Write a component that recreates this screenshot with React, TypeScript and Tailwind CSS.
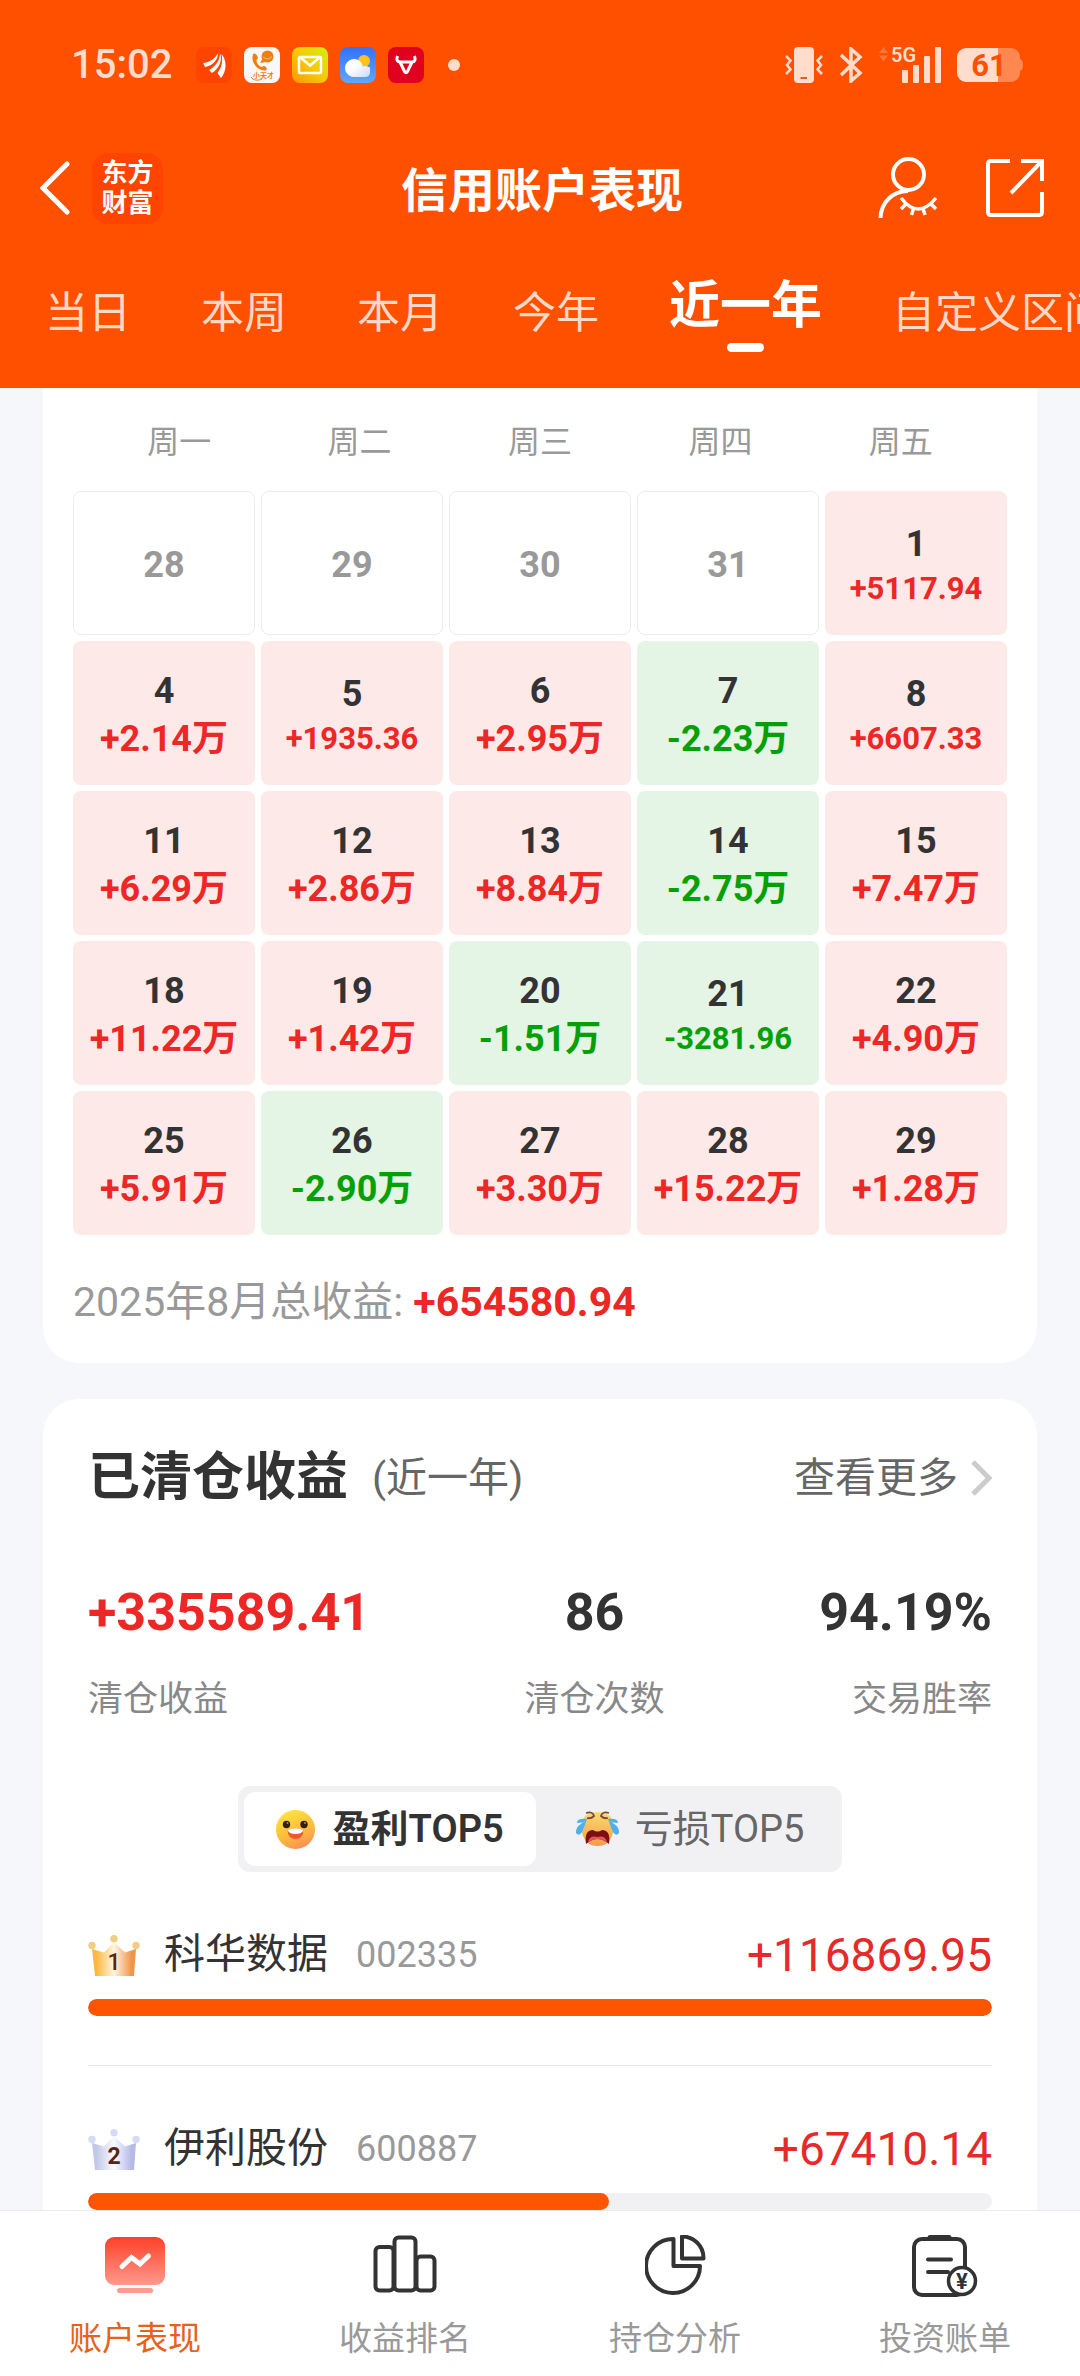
import React, { useState } from 'react';
import clsx from 'clsx';

const RANGES = ['当日', '本周', '本月', '今年', '近一年', '自定义区间'];
const WEEKDAYS = ['周一', '周二', '周三', '周四', '周五'];

interface Day {
  day: number;
  value?: string;
}

const DAYS: Day[] = [
  { day: 28 }, { day: 29 }, { day: 30 }, { day: 31 }, { day: 1, value: '+5117.94' },
  { day: 4, value: '+2.14万' }, { day: 5, value: '+1935.36' }, { day: 6, value: '+2.95万' }, { day: 7, value: '-2.23万' }, { day: 8, value: '+6607.33' },
  { day: 11, value: '+6.29万' }, { day: 12, value: '+2.86万' }, { day: 13, value: '+8.84万' }, { day: 14, value: '-2.75万' }, { day: 15, value: '+7.47万' },
  { day: 18, value: '+11.22万' }, { day: 19, value: '+1.42万' }, { day: 20, value: '-1.51万' }, { day: 21, value: '-3281.96' }, { day: 22, value: '+4.90万' },
  { day: 25, value: '+5.91万' }, { day: 26, value: '-2.90万' }, { day: 27, value: '+3.30万' }, { day: 28, value: '+15.22万' }, { day: 29, value: '+1.28万' },
];

const STOCKS = [
  { rank: 1, name: '科华数据', code: '002335', profit: 116869.95 },
  { rank: 2, name: '伊利股份', code: '600887', profit: 67410.14 },
];

const AppIcons: React.FC = () => (
  <div className="flex gap-3">
    <svg className="size-9" viewBox="0 0 36 36" fill="#fff">
      <rect width="36" height="36" rx="8" fill="#ff4400" />
      <path d="M7 16C13 15.500 19 12 22 6C22 13 17 18.500 9 20Z" />
      <path d="M13 23C20 19 23.500 14 24 6.500C27 13 23 21.500 16 26Z" />
      <path d="M21.500 26C26 20 27 14 25.500 7C31 13 31 24 25 31Z" />
    </svg>
    <svg className="size-9" viewBox="0 0 36 36">
      <rect width="36" height="36" rx="8" fill="#f8f8f8" />
      <circle cx="23.500" cy="9.500" r="6" fill="#f07f12" />
      <path d="M16 16L19 11L22 15Z" fill="#f07f12" />
      <path d="M19 10Q24 14 28 9.500" fill="none" stroke="#f9bd7c" />
      <path d="M9 7.500C6.500 14 12 23 21 23.500C24 23 23 20 20 19L17.500 20C14 18.500 12.500 16 12.500 13L14 11C13 7 10 5.500 9 7.500Z" fill="#f07f12" />
      <text x="19.500" y="31" fontSize="7" fontWeight="700" textAnchor="middle" fill="#f07f12">小天才</text>
      <path d="M7 30C9 33.500 14 34 18 32" fill="none" stroke="#f07f12" />
    </svg>
    <svg className="size-9" viewBox="0 0 36 36">
      <defs>
        <linearGradient id="mailBg" x1="0" y1="1" x2="1" y2="0">
          <stop offset="0" stopColor="#ff9500" />
          <stop offset="0.500" stopColor="#f7c908" />
          <stop offset="1" stopColor="#cff010" />
        </linearGradient>
      </defs>
      <rect width="36" height="36" rx="8" fill="url(#mailBg)" />
      <rect x="7" y="10" width="22" height="16" rx="1" fill="none" stroke="#fff" strokeWidth="2.500" />
      <path d="M9 11L18 18.500L27 11" fill="none" stroke="#fff" strokeWidth="2.500" />
    </svg>
    <svg className="size-9" viewBox="0 0 36 36">
      <defs>
        <linearGradient id="skyBg" x1="0" y1="0" x2="0" y2="1">
          <stop offset="0" stopColor="#2f72fb" />
          <stop offset="1" stopColor="#62a6fb" />
        </linearGradient>
        <linearGradient id="cloud" x1="0" y1="0" x2="1" y2="1">
          <stop offset="0.400" stopColor="#fff" />
          <stop offset="1" stopColor="#c5dcfb" />
        </linearGradient>
      </defs>
      <rect width="36" height="36" rx="8" fill="url(#skyBg)" />
      <circle cx="24" cy="14" r="6" fill="#ffc21c" />
      <path d="M14 30A9 9 0 1 1 21.500 16Q22.500 18 22.500 19.500Q26 18 30 20.500V25Q30 30 25 30Z" fill="url(#cloud)" />
    </svg>
    <svg className="size-9" viewBox="0 0 36 36">
      <rect width="36" height="36" rx="8" fill="#e0001f" />
      <path d="M9.500 9Q7.500 15 12.500 15H23.500Q28.500 15 26.500 9" fill="none" stroke="#fff" strokeWidth="3" />
      <path d="M12 15L16.500 24.500Q18 27 19.500 24.500L24 15" fill="none" stroke="#fff" strokeWidth="3" />
    </svg>
  </div>
);

const StatusIcons: React.FC = () => (
  <div className="flex items-center gap-4">
    <svg className="h-9 w-[38px]" viewBox="0 0 38 36" fill="none" stroke="#ffdccb" strokeWidth="2.500">
      <rect x="9" width="20" height="36" rx="4" fill="#ffdccb" stroke="none" />
      <path d="M15.500 31H22" stroke="#d9622b" strokeWidth="2" />
      <path d="M1 9L5.500 13.500L2 18L5.500 22.500L1 27" />
      <path d="M37 9L32.500 13.500L36 18L32.500 22.500L37 27" />
    </svg>
    <svg className="h-9 w-6" viewBox="0 0 24 36" fill="none" stroke="#ffdccb" strokeWidth="3.500">
      <path d="M2 8L21 26L12 34V2L21 10L2 28" />
    </svg>
    <svg className="h-9 w-[62px] overflow-visible" viewBox="0 0 62 36" fill="#ffdccb">
      <path d="M0 6L4.500 0L9 6ZM0 8.500L4.500 14.500L9 8.500Z" fill="#ff7537" />
      <text x="12" y="15" fontSize="20" fontWeight="600">5G</text>
      <rect x="23" y="23" width="6" height="13" rx="1" />
      <rect x="34" y="18" width="6" height="18" rx="1" />
      <rect x="45" y="9" width="6" height="27" rx="1" />
      <rect x="56" y="0" width="6" height="36" rx="1" />
    </svg>
    <svg className="h-[34px] w-[66px] overflow-visible" viewBox="0 0 66 34">
      <path d="M41 0H54A9 9 0 0 1 63 9V11Q66 12 66 17T63 23V25A9 9 0 0 1 54 34H41Z" fill="#ff8850" />
      <path d="M41 0H9A9 9 0 0 0 0 9V25A9 9 0 0 0 9 34H41Z" fill="#ffdccb" />
      <text x="32" y="28" fontSize="31" fontWeight="700" textAnchor="middle" fill="#ff5000">61</text>
    </svg>
  </div>
);

const UserIcon: React.FC = () => (
  <svg className="h-[62px] w-[60px]" viewBox="0 0 60 62" fill="none" stroke="#fff" strokeWidth="4">
    <circle cx="30.500" cy="17.500" r="15.500" />
    <path d="M30 34C15 34 3 45 2.500 61" />
    <path d="M23 41Q40 63 58 41" strokeWidth="3.500" />
    <path d="M28 47L23 52M35.500 51.500L33.500 58M45 51.500L47 58M53 47L58 52" strokeWidth="3.500" />
  </svg>
);

const ShareIcon: React.FC = () => (
  <svg className="size-[58px]" viewBox="0 0 58 58" fill="none" stroke="#fff" strokeWidth="4">
    <path d="M24 2H5Q2 2 2 5V53Q2 56 5 56H53Q56 56 56 53V33" />
    <path d="M35 2H56V22M56 2L25 34" />
  </svg>
);

const CrownIcon: React.FC<{ rank: number }> = ({ rank }) => {
  const [edge, middle, end] = rank === 1 ? ['#fbb840', '#fff6e2', '#f0944a'] : ['#c3c8e6', '#fafaff', '#b4b9e8'];
  return (
    <svg className="h-[41px] w-[52px]" viewBox="0 0 52 41">
      <defs>
        <linearGradient id={`crown${rank}`}>
          <stop offset="0.100" stopColor={edge} />
          <stop offset="0.500" stopColor={middle} />
          <stop offset="0.900" stopColor={end} />
        </linearGradient>
      </defs>
      <g fill={rank === 1 ? '#f3cd80' : '#d5daf5'}>
        <circle cx="4" cy="10.500" r="3.700" />
        <circle cx="26" cy="3.700" r="3.700" />
        <circle cx="48" cy="10.500" r="3.700" />
      </g>
      <path d="M4 14L16 17.500L26 7L37 17.500L48 14L46 41H7Z" fill={`url(#crown${rank})`} />
      <text x="26" y="35" fontSize="23" fontWeight={rank === 1 ? 500 : 700} textAnchor="middle" fill="#5c2216">{rank}</text>
    </svg>
  );
};

const SmileIcon: React.FC = () => (
  <svg className="size-[39px]" viewBox="0 0 39 39">
    <defs>
      <linearGradient id="smile" x1="0.300" y1="0" x2="0.700" y2="1">
        <stop offset="0" stopColor="#ffe43c" />
        <stop offset="0.600" stopColor="#fdb93e" />
        <stop offset="1" stopColor="#f98c58" />
      </linearGradient>
    </defs>
    <circle cx="19.500" cy="19.500" r="19.500" fill="url(#smile)" />
    <circle cx="10.500" cy="14.500" r="3.700" fill="#33200f" />
    <circle cx="28" cy="14.500" r="3.700" fill="#33200f" />
    <circle cx="11.500" cy="13" r="1" fill="#a58f80" />
    <circle cx="29" cy="13" r="1" fill="#a58f80" />
    <path d="M11.500 20Q19.500 16.500 27.500 20Q27 29 19.500 29T11.500 20Z" fill="#f4572e" />
    <path d="M11.500 20Q19.500 16.500 27.500 20Q26 24 19.500 24T11.500 20Z" fill="#fff" />
  </svg>
);

const CryIcon: React.FC = () => (
  <svg className="h-[36px] w-[43px]" viewBox="0 0 43 36">
    <defs>
      <linearGradient id="cry" x1="0" y1="0" x2="0" y2="1">
        <stop offset="0" stopColor="#fbdc6c" />
        <stop offset="1" stopColor="#f39a4e" />
      </linearGradient>
    </defs>
    <path d="M9 5Q21.500 -3 34 5Q40 14 36 25Q32 35 21.500 35T7 25Q3 14 9 5Z" fill="url(#cry)" />
    <path d="M10 2Q17 0 18 5Q15 8 11 7M33 2Q26 0 25 5Q28 8 32 7" fill="none" stroke="#7a4a45" strokeWidth="1.800" />
    <path d="M10 33Q8 19 17 19Q21.500 22 26 19Q35 19 33 33Q27 28 21.500 28T10 33Z" fill="#7d0f14" />
    <path d="M12 31Q14 24 21.500 26Q29 24 31 31Q26 28 21.500 28T12 31Z" fill="#e2555f" />
    <path d="M11 8Q1 7 1 12Q6 12 10 10Q-1 15 0 22Q3 26 6 21Q9 14 11 8Z" fill="#4fb0ee" />
    <path d="M32 8Q42 7 42 12Q37 12 33 10Q44 15 43 22Q40 26 37 21Q34 14 32 8Z" fill="#4fb0ee" />
  </svg>
);

const PerformanceIcon: React.FC = () => (
  <svg className="h-[62px] w-[60px]" viewBox="0 0 60 62">
    <defs>
      <linearGradient id="perf" x1="0" y1="0" x2="0" y2="1">
        <stop offset="0" stopColor="#ff4029" />
        <stop offset="1" stopColor="#ff998c" />
      </linearGradient>
    </defs>
    <rect y="2" width="60" height="48" rx="9" fill="url(#perf)" />
    <rect x="12" y="53" width="36" height="5" rx="2.500" fill="#fe9b90" />
    <path d="M17 31.500L26.500 22.500L35 29L43.500 21" fill="none" stroke="#fff" strokeWidth="5" strokeLinecap="round" />
  </svg>
);

const RankingIcon: React.FC = () => (
  <svg className="h-[62px] w-[64px]" viewBox="0 0 64 62" fill="none" stroke="#333" strokeWidth="4">
    <rect x="2.500" y="12" width="18" height="43.500" rx="4" />
    <rect x="21.500" y="2.500" width="21" height="53" rx="4" />
    <rect x="43.500" y="21.500" width="18" height="34" rx="4" />
  </svg>
);

const HoldingIcon: React.FC = () => (
  <svg className="h-[62px] w-[61px]" viewBox="0 0 61 62" fill="none" stroke="#333" strokeWidth="4" strokeLinejoin="round">
    <path d="M28.500 4A27 27 0 1 0 55 31H28.500Z" />
    <path d="M37 1.500A21.500 21.500 0 0 1 58.500 23.500H37Z" />
  </svg>
);

const BillIcon: React.FC = () => (
  <svg className="h-[62px] w-[66px]" viewBox="0 0 66 62" fill="none" stroke="#333" strokeWidth="4" strokeLinecap="round">
    <rect x="2" y="4" width="51" height="56" rx="8" />
    <path d="M18 2.500H37" strokeWidth="5" />
    <path d="M16 24.500H39M16 37H36" />
    <circle cx="50" cy="46" r="13.500" fill="#fff" strokeWidth="3.500" />
    <text x="50" y="54" fontSize="22" fontWeight="700" textAnchor="middle" fill="#333" stroke="none">¥</text>
  </svg>
);

const NAV = [
  { label: '账户表现', Icon: PerformanceIcon },
  { label: '收益排名', Icon: RankingIcon },
  { label: '持仓分析', Icon: HoldingIcon },
  { label: '投资账单', Icon: BillIcon },
];

const DayCell: React.FC<Day> = ({ day, value }) => {
  if (!value) {
    return (
      <div className="flex h-36 items-center justify-center rounded-lg border border-[#ececec] pt-1 text-[36px] font-bold text-[#999]">
        {day}
      </div>
    );
  }
  const isGain = value.startsWith('+');
  const isLarge = value.endsWith('万');
  return (
    <div className={clsx('flex h-36 flex-col items-center justify-center rounded-lg font-bold', isGain ? 'bg-[#fde9e8]' : 'bg-[#e4f4e5]')}>
      <span className="text-[36px] leading-[52px] text-[#333]">{day}</span>
      <span
        className={clsx(
          isLarge ? 'text-[36px] leading-[44px]' : 'text-[31px] leading-[38px]',
          isGain ? 'text-[#ed2626]' : 'text-[#05a005]'
        )}
      >
        {value}
      </span>
    </div>
  );
};

const App: React.FC = () => {
  const [range, setRange] = useState('近一年');
  const [board, setBoard] = useState<'profit' | 'loss'>('profit');
  const [page, setPage] = useState('账户表现');
  const maxProfit = STOCKS[0].profit;

  return (
    <div className="flex h-screen flex-col overflow-hidden bg-[#f6f7fa] font-['Roboto','Noto_Sans_CJK_SC',sans-serif] text-[#333]">
      <header className="shrink-0 bg-[#ff5000] pt-[47px] text-white">
        <div className="flex h-9 items-center justify-between pr-[57px] pl-[71px]">
          <div className="flex items-center">
            <span className="mr-6 text-[40px] leading-9 font-medium text-[#ffdccb]">15:02</span>
            <AppIcons />
            <span className="ml-6 size-3 rounded-full bg-[#ffdccb]" />
          </div>
          <StatusIcons />
        </div>

        <div className="mt-[67px] grid h-[72px] grid-cols-[1fr_auto_1fr] items-center pr-9 pl-10">
          <div className="flex items-center gap-[22px]">
            <button type="button" aria-label="返回">
              <svg className="h-[54px] w-[30px]" viewBox="0 0 30 54" fill="none" stroke="#fff" strokeWidth="5" strokeLinecap="round">
                <path d="M27 3L3 27L27 51" />
              </svg>
            </button>
            <span className="flex size-[71px] items-center justify-center rounded-2xl bg-[#ff4400] text-center text-[26px] leading-[30px] font-bold">
              东方
              <br />
              财富
            </span>
          </div>
          <h1 className="pt-1.5 text-[47px] font-bold">信用账户表现</h1>
          <div className="flex items-center justify-end gap-12">
            <button type="button" aria-label="隐藏账户">
              <UserIcon />
            </button>
            <button type="button" aria-label="分享">
              <ShareIcon />
            </button>
          </div>
        </div>

        <nav className="flex items-start gap-[70px] overflow-x-auto pt-[52px] pb-9 pl-[45px] whitespace-nowrap [scrollbar-width:none]">
          {RANGES.map((item) => (
            <button
              key={item}
              type="button"
              onClick={() => setRange(item)}
              className={clsx(
                'flex shrink-0 flex-col items-center',
                item === range ? 'text-[51px] leading-[64px] font-bold' : 'text-[43px] leading-[78px] text-[#ffd9c8]'
              )}
            >
              {item}
              {item === range && <span className="mt-[5px] h-[9px] w-[37px] rounded-full bg-white" />}
            </button>
          ))}
        </nav>
      </header>

      <main className="min-h-0 flex-1 overflow-y-auto px-[43px] [scrollbar-width:none]">
        <section className="rounded-b-[36px] bg-white px-[30px] pt-[34px] pb-[31px]">
          <div className="mb-[29px] grid grid-cols-5 px-4 text-center text-[32px] leading-10 text-[#999]">
            {WEEKDAYS.map((name) => (
              <span key={name}>{name}</span>
            ))}
          </div>
          <div className="grid grid-cols-5 gap-1.5">
            {DAYS.map((item, i) => (
              <DayCell key={i} {...item} />
            ))}
          </div>
          <p className="mt-[37px] text-[41px] leading-[60px] text-[#999]">
            2025年8月总收益: <strong className="font-bold text-[#ed2626]">+654580.94</strong>
          </p>
        </section>

        <section className="mt-9 rounded-t-[36px] bg-white px-[45px] pt-[47px]">
          <div className="flex items-center justify-between leading-[64px]">
            <h2 className="flex items-center gap-6 text-[52px] font-bold">
              已清仓收益
              <span className="text-[41px] font-normal text-[#666]">(近一年)</span>
            </h2>
            <button type="button" className="flex items-center gap-3 text-[41px] text-[#666]">
              查看更多
              <svg className="h-9 w-[22px]" viewBox="0 0 22 36" fill="none" stroke="#ccc" strokeWidth="5">
                <path d="M3 2L19 18L3 34" />
              </svg>
            </button>
          </div>

          <dl className="mt-[73px] flex justify-between text-[35px] text-[#888]">
            <div className="flex flex-col-reverse gap-[37px]">
              <dt className="leading-10">清仓收益</dt>
              <dd className="text-[52px] leading-[60px] font-bold text-[#ed2626]">+335589.41</dd>
            </div>
            <div className="flex flex-col-reverse gap-[37px] text-center">
              <dt className="leading-10">清仓次数</dt>
              <dd className="text-[52px] leading-[60px] font-bold text-[#333]">86</dd>
            </div>
            <div className="flex flex-col-reverse gap-[37px] text-right">
              <dt className="leading-10">交易胜率</dt>
              <dd className="text-[52px] leading-[60px] font-bold text-[#333]">94.19%</dd>
            </div>
          </dl>

          <div className="mx-auto mt-[66px] flex w-fit gap-2 rounded-xl bg-[#f1f1f4] p-1.5 text-[38px]">
            <button
              type="button"
              onClick={() => setBoard('profit')}
              className={clsx('flex h-[74px] items-center gap-[18px] rounded-xl px-8', board === 'profit' ? 'bg-white font-semibold' : 'text-[#666]')}
            >
              <SmileIcon />
              盈利TOP5
            </button>
            <button
              type="button"
              onClick={() => setBoard('loss')}
              className={clsx('flex h-[74px] items-center gap-[16px] rounded-xl px-8', board === 'loss' ? 'bg-white font-semibold' : 'text-[#666]')}
            >
              <CryIcon />
              亏损TOP5
            </button>
          </div>

          <ul>
            {STOCKS.map((stock) => (
              <li key={stock.code} className="border-b border-[#e8e8e8] pt-[53px] pb-[49px]">
                <div className="flex h-[60px] items-center">
                  <CrownIcon rank={stock.rank} />
                  <span className="ml-6 text-[41px]">{stock.name}</span>
                  <span className="ml-7 text-[36px] text-[#999]">{stock.code}</span>
                  <span className="ml-auto text-[46px] text-[#e62a2a]">+{stock.profit}</span>
                </div>
                <div className="mt-[14px] h-[17px] overflow-hidden rounded-full bg-[#f1f1f4]">
                  <div className="h-full rounded-full bg-[#ff5500]" style={{ width: `${(stock.profit / maxProfit) * 100}%` }} />
                </div>
              </li>
            ))}
          </ul>
        </section>
      </main>

      <nav className="grid shrink-0 grid-cols-4 border-t border-[#ececec] bg-white pt-6 pb-[17px]">
        {NAV.map(({ label, Icon }) => (
          <button
            key={label}
            type="button"
            onClick={() => setPage(label)}
            className={clsx('flex flex-col items-center gap-[22px] text-[33px] leading-10', label === page ? 'text-[#e8611a]' : 'text-[#999]')}
          >
            <Icon />
            {label}
          </button>
        ))}
      </nav>
    </div>
  );
};

export default App;
